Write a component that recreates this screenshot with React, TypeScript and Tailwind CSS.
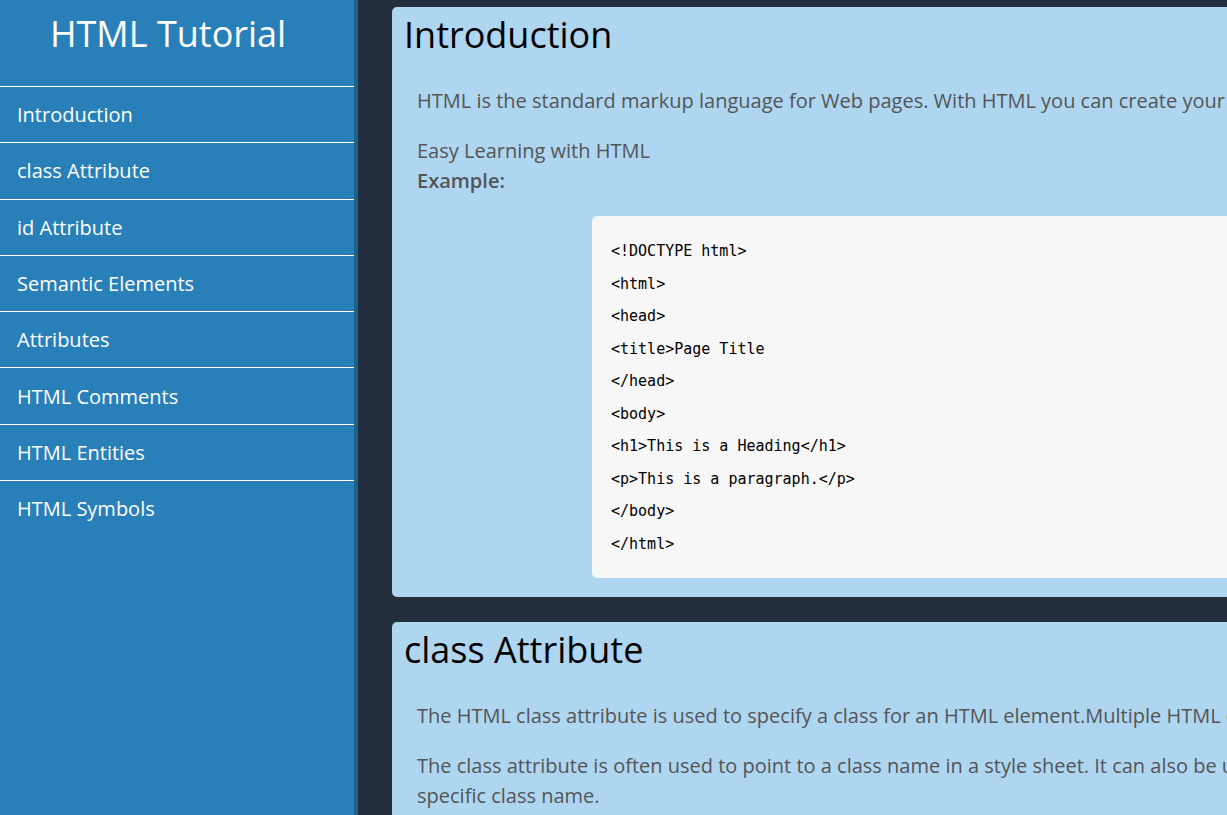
import React from 'react';

const navItems = [
  'Introduction',
  'class Attribute',
  'id Attribute',
  'Semantic Elements',
  'Attributes',
  'HTML Comments',
  'HTML Entities',
  'HTML Symbols',
];

const codeLines = [
  '<!DOCTYPE html>',
  '<html>',
  '<head>',
  '<title>Page Title',
  '</head>',
  '<body>',
  '<h1>This is a Heading</h1>',
  '<p>This is a paragraph.</p>',
  '</body>',
  '</html>',
];

const Section: React.FC<{ title: string; children: React.ReactNode }> = ({ title, children }) => (
  <section className="w-[1480px] shrink-0 rounded-[5px] bg-[#aed6f1] px-[12px] pb-[19px]">
    <h1 className="h-[54px] pt-[1px] text-[36px] leading-[54px] font-normal text-black">{title}</h1>
    <div className="mt-[25px] pl-[13px] pr-[25px]">{children}</div>
  </section>
);

export default function App() {
  return (
    <div
      className="flex h-[815px] w-full overflow-hidden"
      style={{ fontFamily: '"Open Sans", "Noto Sans", sans-serif' }}
    >
      {/* 侧边栏 */}
      <aside className="h-full w-[358px] shrink-0 border-r-4 border-[#1f618d] bg-[#2980b9] text-white">
        <div className="h-[86px] pt-[7px] pl-[50px]">
          <div className="text-[36px] leading-[54px]">HTML Tutorial</div>
        </div>
        <nav>
          {navItems.map((item) => (
            <div
              key={item}
              className="flex h-[56.3px] items-center border-t border-white pl-[17px] text-[20px] leading-[27px]"
            >
              {item}
            </div>
          ))}
        </nav>
      </aside>

      {/* 主内容 */}
      <main className="flex min-w-0 flex-1 flex-col gap-[25px] overflow-hidden bg-[#222e3b] pt-[7px] pl-[34px]">
        <Section title="Introduction">
          <p className="text-[20px] leading-[30px] text-[#555]">
            HTML is the standard markup language for Web pages. With HTML you can create your own Website.
          </p>
          <p className="mt-[20px] text-[20px] leading-[30px] text-[#555]">
            Easy Learning with HTML
            <br />
            <b className="font-semibold">Example:</b>
          </p>
          <div
            className="mt-[20px] ml-[175px] w-[1000px] rounded-[5px] bg-[#f7f7f7] px-[19px] pt-[19px] pb-[18px] text-[15px] text-black"
            style={{ fontFamily: '"DejaVu Sans Mono", "Liberation Mono", monospace' }}
          >
            {codeLines.map((line, i) => (
              <div key={i} className="h-[32.5px] leading-[32.5px] whitespace-pre">
                {line}
              </div>
            ))}
          </div>
        </Section>

        <Section title="class Attribute">
          <p className="text-[20px] leading-[30px] text-[#555]">
            The HTML class attribute is used to specify a class for an HTML element.Multiple HTML elements can share the same class.
          </p>
          <p className="mt-[20px] text-[20px] leading-[30px] text-[#555]">
            The class attribute is often used to point to a class name in a style sheet. It can also be used by a JavaScript to access and manipulate elements with the specific class name.
          </p>
        </Section>
      </main>
    </div>
  );
}
